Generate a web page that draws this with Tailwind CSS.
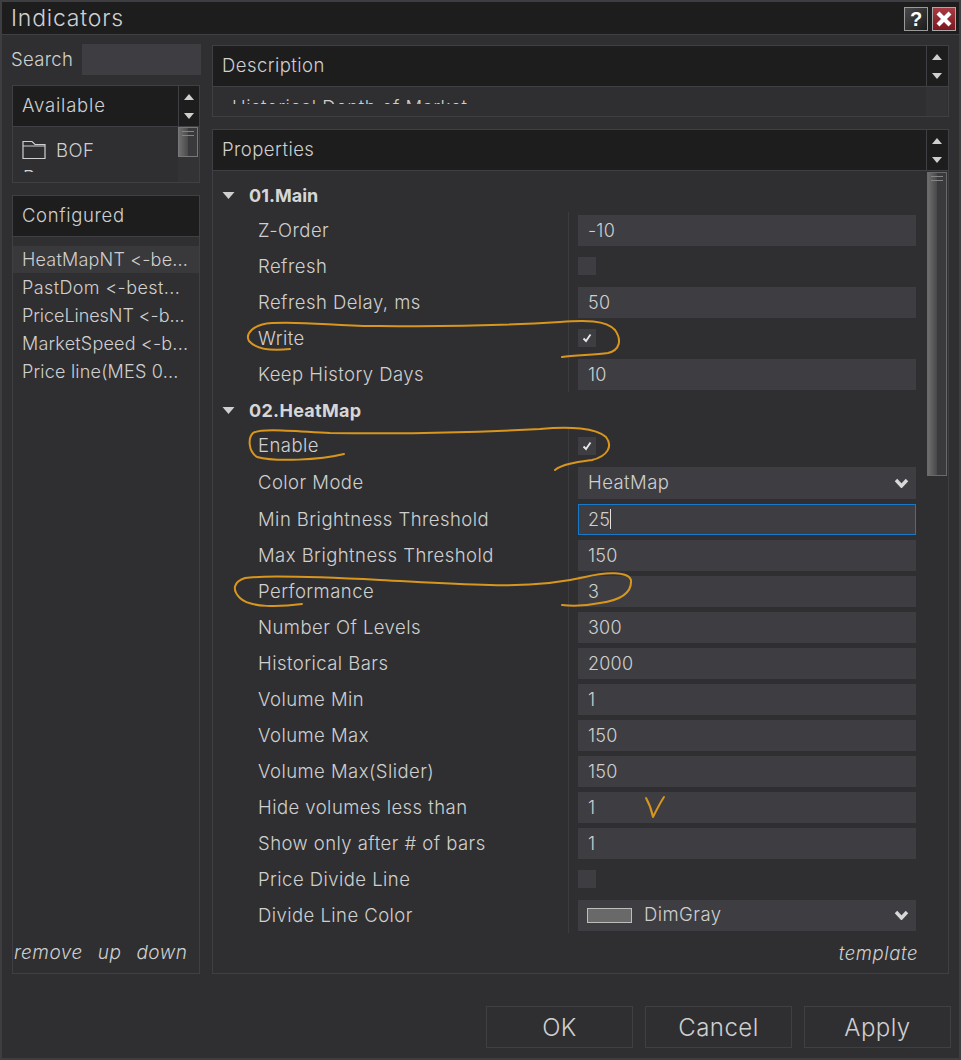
<!DOCTYPE html>
<html><head><meta charset="utf-8">
<script src="https://cdn.jsdelivr.net/npm/@tailwindcss/browser@4"></script>
</head>
<body class="m-0 bg-[#2f2f31]">
<div class="relative w-[961px] h-[1060px] overflow-hidden bg-[#2f2f31] border-2 border-[#3e3e42] flex flex-col font-['Inter','Liberation_Sans',sans-serif] font-light text-[18.5px] tracking-[0.45px] text-[#cfcfcf] box-border">
  <!-- title -->
  <div class="h-[33px] shrink-0 bg-[#1d1d1e] border-b border-[#404044] flex items-center justify-between pl-[9px] pr-[3px]">
    <span class="text-[23px] tracking-[0.8px] text-[#d0d0d0]">Indicators</span>
    <div class="flex gap-[4px] mt-[2px]">
      <div class="w-[24px] h-[24px] border border-[#9a9a9a] bg-gradient-to-br from-[#4a4a4a] to-[#1c1c1c] flex items-center justify-center text-white font-bold text-[20px] tracking-normal font-['Liberation_Sans',sans-serif] leading-none">?</div>
      <div class="w-[24px] h-[24px] border border-[#a9a9a9] bg-gradient-to-b from-[#a83a42] to-[#7c1720] flex items-center justify-center">
        <svg viewBox="0 0 20 20" class="w-[20px] h-[20px]"><path d="M4 4 L16 16 M16 4 L4 16" stroke="#fff" stroke-width="4.2" fill="none"/></svg>
      </div>
    </div>
  </div>
  <div class="flex-1 flex flex-col pl-[10px] pr-[10px]">
    <div class="flex-1 flex gap-[12px] min-h-0">
      <!-- left -->
      <div class="w-[188px] flex flex-col shrink-0">
        <div class="flex items-center h-[31px] mt-[9px] -ml-[1px] -mr-[1px] gap-[9px]">
          <span class="w-[62px] shrink-0 tracking-[0.3px]">Search</span>
          <div class="flex-1 h-[31px] bg-[#3e3e42]"></div>
        </div>
        <div class="mt-[10px] h-[98px] border border-[#404044] flex flex-col">
          <div class="h-[41px] shrink-0 bg-[#1d1d1e] border-b border-[#404044] flex">
            <div class="flex-1 flex items-center pl-[9px] tracking-[0.8px]">Available</div>
            <div class="w-[21px] border-l border-[#404044] flex flex-col items-center justify-center gap-[13px]">
              <svg viewBox="0 0 10 6" class="w-[10px] h-[6px]"><path d="M0 6 L5 0 L10 6Z" fill="#cfcfcf"/></svg>
              <svg viewBox="0 0 10 6" class="w-[10px] h-[6px]"><path d="M0 0 L10 0 L5 6Z" fill="#cfcfcf"/></svg>
            </div>
          </div>
          <div class="flex-1 flex min-h-0 overflow-hidden">
            <div class="flex-1 h-[45px] pl-[9px] pt-[9px] overflow-hidden">
              <div class="flex items-center gap-[10px] h-[28px]">
                <svg viewBox="0 0 24 20" class="w-[24px] h-[20px]"><path d="M1 1.5 H10 L13 4.5 H23 V18.5 H1 Z M1 6 H23" fill="none" stroke="#cfcfcf" stroke-width="1.2"/></svg>
                <span class="pt-[2px]">BOF</span>
              </div>
              <div class="mt-[2px] pl-[1px] leading-[22px]">Bars</div>
            </div>
            <div class="w-[21px] relative bg-[#333335]">
              <div class="absolute left-0 right-[1px] top-0 h-[30px] border border-[#77777a] bg-gradient-to-r from-[#6f6f6f] from-0% via-[#4a4a4c] via-50% to-[#3a3a3c] to-50% flex flex-col gap-[3px] pt-[3px] px-[3px]">
                <div class="h-px bg-[#858585]"></div><div class="h-px bg-[#858585]"></div>
              </div>
            </div>
          </div>
        </div>
        <div class="mt-[12px] flex-1 min-h-0 border border-[#404044] flex flex-col">
          <div class="h-[41px] shrink-0 bg-[#1d1d1e] border-b border-[#404044] flex items-center pl-[9px] tracking-[0.65px]">Configured</div>
          <div class="flex-1 pt-[9px] text-[18px] tracking-[0.2px]">
            <div class="h-[27px] bg-[#39393b] pl-[9px] flex items-center whitespace-nowrap overflow-hidden">HeatMapNT &lt;-be...</div>
            <div class="h-[28px] pl-[9px] flex items-center whitespace-nowrap overflow-hidden tracking-[0.4px]">PastDom &lt;-best...</div>
            <div class="h-[28px] pl-[9px] flex items-center whitespace-nowrap overflow-hidden tracking-[-0.05px]">PriceLinesNT &lt;-b...</div>
            <div class="h-[28px] pl-[9px] flex items-center whitespace-nowrap overflow-hidden">MarketSpeed &lt;-b...</div>
            <div class="h-[28px] pl-[9px] flex items-center whitespace-nowrap overflow-hidden">Price line(MES 0...</div>
          </div>
          <div class="h-[40px] flex items-start gap-[15px] pl-[1px] pt-[6px] italic text-[19px] tracking-[0.5px]"><span>remove</span><span>up</span><span>down</span></div>
        </div>
      </div>
      <!-- right -->
      <div class="w-[737px] flex flex-col shrink-0">
        <div class="mt-[10px] h-[72px] shrink-0 border border-[#404044] flex flex-col">
          <div class="h-[41px] shrink-0 bg-[#1d1d1e] border-b border-[#404044] flex">
            <div class="flex-1 flex items-center pl-[9px]">Description</div>
            <div class="w-[21px] border-l border-[#404044] flex flex-col items-center justify-center gap-[13px] mr-px">
              <svg viewBox="0 0 10 6" class="w-[10px] h-[6px]"><path d="M0 6 L5 0 L10 6Z" fill="#cfcfcf"/></svg>
              <svg viewBox="0 0 10 6" class="w-[10px] h-[6px]"><path d="M0 0 L10 0 L5 6Z" fill="#cfcfcf"/></svg>
            </div>
          </div>
          <div class="flex-1 flex min-h-0">
            <div class="flex-1 min-w-0 h-[17px] overflow-hidden pl-[19px] pt-[9px] leading-[22px] whitespace-nowrap">Historical Depth of Market</div>
            <div class="w-[21px] mr-px bg-[#333335]"></div>
          </div>
        </div>
        <div class="mt-[12px] flex-1 min-h-0 border border-[#404044] flex flex-col">
          <div class="h-[41px] shrink-0 bg-[#1d1d1e] border-b border-[#404044] flex">
            <div class="flex-1 flex items-center pl-[9px]">Properties</div>
            <div class="w-[21px] border-l border-[#404044] flex flex-col items-center justify-center gap-[13px] mr-px">
              <svg viewBox="0 0 10 6" class="w-[10px] h-[6px]"><path d="M0 6 L5 0 L10 6Z" fill="#cfcfcf"/></svg>
              <svg viewBox="0 0 10 6" class="w-[10px] h-[6px]"><path d="M0 0 L10 0 L5 6Z" fill="#cfcfcf"/></svg>
            </div>
          </div>
          <div class="flex-1 flex min-h-0">
            <div class="flex-1 min-w-0 flex flex-col pt-[7px]">
              <div class="h-[34px] flex items-center pl-[9px] gap-[14px] font-bold text-[18px] text-[#d6d6d6]">
                <svg viewBox="0 0 12 7" class="w-[13px] h-[7px]"><path d="M0 0 H12 L6 7Z" fill="#cfcfcf"/></svg><span class="tracking-normal">01.Main</span>
              </div>
              <div class="ml-[45px] mr-[10px] flex flex-col">
                <div class="h-[36px] flex items-center"><span class="w-[311px] h-full pt-[2px] flex items-center border-r border-[#3c3c3f] mr-[9px]">Z-Order</span><div class="w-[338px] h-[31px] bg-[#3e3e42] flex items-center pl-[10px] text-[18px] tracking-[0.2px]">-10</div></div>
                <div class="h-[36px] flex items-center"><span class="w-[311px] h-full pt-[2px] flex items-center border-r border-[#3c3c3f] mr-[9px]">Refresh</span><div class="w-[18px] h-[18px] bg-[#3e3e42]"></div></div>
                <div class="h-[36px] flex items-center"><span class="w-[311px] h-full pt-[2px] flex items-center border-r border-[#3c3c3f] mr-[9px]">Refresh Delay, ms</span><div class="w-[338px] h-[31px] bg-[#3e3e42] flex items-center pl-[10px] text-[18px] tracking-[0.2px]">50</div></div>
                <div class="h-[36px] flex items-center"><span class="w-[311px] h-full pt-[2px] flex items-center border-r border-[#3c3c3f] mr-[9px]">Write</span><div class="w-[18px] h-[18px] bg-[#3e3e42] flex items-center justify-center"><svg viewBox="0 0 10 10" class="w-[10px] h-[10px]"><path d="M1.5 5.5 L4 8 L8.5 1.5" fill="none" stroke="#e8e8e8" stroke-width="1.8"/></svg></div></div>
                <div class="h-[36px] flex items-center"><span class="w-[311px] h-full pt-[2px] flex items-center border-r border-[#3c3c3f] mr-[9px]">Keep History Days</span><div class="w-[338px] h-[31px] bg-[#3e3e42] flex items-center pl-[10px] text-[18px] tracking-[0.2px]">10</div></div>
              </div>
              <div class="h-[36px] flex items-center pl-[9px] gap-[14px] font-bold text-[18px] text-[#d6d6d6]">
                <svg viewBox="0 0 12 7" class="w-[13px] h-[7px]"><path d="M0 0 H12 L6 7Z" fill="#cfcfcf"/></svg><span class="tracking-[0.3px]">02.HeatMap</span>
              </div>
              <div class="ml-[45px] mr-[10px] flex flex-col">
                <div class="h-[36px] flex items-center"><span class="w-[311px] h-full flex items-center border-r border-[#3c3c3f] mr-[9px]">Enable</span><div class="w-[18px] h-[18px] bg-[#3e3e42] flex items-center justify-center"><svg viewBox="0 0 10 10" class="w-[10px] h-[10px]"><path d="M1.5 5.5 L4 8 L8.5 1.5" fill="none" stroke="#e8e8e8" stroke-width="1.8"/></svg></div></div>
                <div class="h-[37px] flex items-center"><span class="w-[311px] h-full flex items-center border-r border-[#3c3c3f] mr-[9px]">Color Mode</span><div class="w-[338px] h-[32px] bg-[#3e3e42] flex items-center justify-between pl-[10px] pr-[7px]"><span>HeatMap</span><svg viewBox="0 0 14 10" class="w-[15px] h-[10px]"><path d="M1.5 2 L7 8 L12.5 2" fill="none" stroke="#d8d8d8" stroke-width="3.4"/></svg></div></div>
                <div class="h-[36px] flex items-center"><span class="w-[311px] h-full pt-[2px] flex items-center border-r border-[#3c3c3f] mr-[9px]">Min Brightness Threshold</span><div class="w-[338px] h-[31px] bg-[#3e3e42] border border-[#1a78c8] flex items-center pl-[9px] text-[18px] tracking-[0.2px]"><span>25</span><span class="w-px h-[20px] bg-[#e0e0e0]"></span></div></div>
                <div class="h-[36px] flex items-center"><span class="w-[311px] h-full pt-[2px] flex items-center border-r border-[#3c3c3f] mr-[9px]">Max Brightness Threshold</span><div class="w-[338px] h-[31px] bg-[#3e3e42] flex items-center pl-[10px] text-[18px] tracking-[0.2px]">150</div></div>
                <div class="h-[36px] flex items-center"><span class="w-[311px] h-full pt-[2px] flex items-center border-r border-[#3c3c3f] mr-[9px]">Performance</span><div class="w-[338px] h-[31px] bg-[#3e3e42] flex items-center pl-[10px] text-[18px] tracking-[0.2px]">3</div></div>
                <div class="h-[36px] flex items-center"><span class="w-[311px] h-full pt-[2px] flex items-center border-r border-[#3c3c3f] mr-[9px]">Number Of Levels</span><div class="w-[338px] h-[31px] bg-[#3e3e42] flex items-center pl-[10px] text-[18px] tracking-[0.2px]">300</div></div>
                <div class="h-[36px] flex items-center"><span class="w-[311px] h-full pt-[2px] flex items-center border-r border-[#3c3c3f] mr-[9px]">Historical Bars</span><div class="w-[338px] h-[31px] bg-[#3e3e42] flex items-center pl-[10px] text-[18px] tracking-[0.2px]">2000</div></div>
                <div class="h-[36px] flex items-center"><span class="w-[311px] h-full pt-[2px] flex items-center border-r border-[#3c3c3f] mr-[9px]">Volume Min</span><div class="w-[338px] h-[31px] bg-[#3e3e42] flex items-center pl-[10px] text-[18px] tracking-[0.2px]">1</div></div>
                <div class="h-[36px] flex items-center"><span class="w-[311px] h-full pt-[2px] flex items-center border-r border-[#3c3c3f] mr-[9px]">Volume Max</span><div class="w-[338px] h-[31px] bg-[#3e3e42] flex items-center pl-[10px] text-[18px] tracking-[0.2px]">150</div></div>
                <div class="h-[36px] flex items-center"><span class="w-[311px] h-full pt-[2px] flex items-center border-r border-[#3c3c3f] mr-[9px]">Volume Max(Slider)</span><div class="w-[338px] h-[31px] bg-[#3e3e42] flex items-center pl-[10px] text-[18px] tracking-[0.2px]">150</div></div>
                <div class="h-[36px] flex items-center"><span class="w-[311px] h-full pt-[2px] flex items-center border-r border-[#3c3c3f] mr-[9px]">Hide volumes less than</span><div class="w-[338px] h-[31px] bg-[#3e3e42] flex items-center pl-[10px] text-[18px] tracking-[0.2px]">1</div></div>
                <div class="h-[36px] flex items-center"><span class="w-[311px] h-full pt-[2px] flex items-center border-r border-[#3c3c3f] mr-[9px]">Show only after # of bars</span><div class="w-[338px] h-[31px] bg-[#3e3e42] flex items-center pl-[10px] text-[18px] tracking-[0.2px]">1</div></div>
                <div class="h-[36px] flex items-center"><span class="w-[311px] h-full pt-[2px] flex items-center border-r border-[#3c3c3f] mr-[9px]">Price Divide Line</span><div class="w-[18px] h-[18px] bg-[#3e3e42]"></div></div>
                <div class="h-[36px] flex items-center"><span class="w-[311px] h-full pt-[2px] flex items-center border-r border-[#3c3c3f] mr-[9px]">Divide Line Color</span><div class="w-[338px] h-[31px] bg-[#3e3e42] flex items-center pl-[9px] pr-[7px]"><div class="w-[45px] h-[15px] bg-[#696969] border border-[#bdbdbd] mr-[12px]"></div><span class="flex-1">DimGray</span><svg viewBox="0 0 14 10" class="w-[15px] h-[10px]"><path d="M1.5 2 L7 8 L12.5 2" fill="none" stroke="#d8d8d8" stroke-width="3.4"/></svg></div></div>
              </div>
              <div class="flex justify-end pr-[9px] pt-[7px] italic text-[18.5px] tracking-[0.6px]">template</div>
            </div>
            <div class="w-[21px] shrink-0 relative">
              <div class="absolute left-0 right-[1px] top-[1px] h-[304px] border border-[#6a6a6c] bg-gradient-to-r from-[#6f6f6f] from-0% via-[#48484a] via-50% to-[#3a3a3c] to-50% flex flex-col gap-[3px] pt-[3px] px-[3px]">
                <div class="h-px bg-[#858585]"></div><div class="h-px bg-[#858585]"></div>
              </div>
            </div>
          </div>
        </div>
      </div>
    </div>
    <!-- buttons -->
    <div class="h-[84px] shrink-0 flex justify-end gap-[12px] pt-[32px] -mr-[2px]">
      <div class="w-[147px] h-[42px] pt-[2px] border border-[#404044] flex items-center justify-center text-[24px]">OK</div>
      <div class="w-[147px] h-[42px] pt-[2px] border border-[#404044] flex items-center justify-center text-[24px]">Cancel</div>
      <div class="w-[147px] h-[42px] pt-[2px] border border-[#404044] flex items-center justify-center text-[24px]">Apply</div>
    </div>
  </div>
  <!-- hand-drawn annotations over the page -->
  <svg class="absolute -left-[2px] -top-[2px] w-[961px] h-[1060px] pointer-events-none" viewBox="0 0 961 1060" fill="none" stroke="#d8961e" stroke-width="2" stroke-linecap="round" stroke-linejoin="round">
    <path d="M290 349 C272 351 256 349 249 341 C245 334 253 324 272 323 C310 321 340 327 380 326 C450 327 510 325 560 322 C585 320 606 320 615 330 C622 340 620 350 608 353 C595 355 575 355 562 357"/>
    <path d="M344 454 C320 460 275 462 257 457 C248 451 248 438 253 433 C262 428 290 431 330 433 C400 434 470 433 540 429 C570 426 596 428 606 437 C613 446 608 456 592 460 C578 462 562 464 555 470"/>
    <path d="M302 604 C280 607 250 608 240 598 C232 590 233 582 245 578 C265 575 320 577 380 580 C420 582 450 584 490 585 C530 586 560 583 585 577 C605 572 628 571 631 580 C632 592 622 600 600 603 C585 606 570 606 562 605"/>
    <path d="M646 798 C650 805 652 812 653 817 C657 809 660 803 664 797"/>
  </svg>
</div>
</body></html>
